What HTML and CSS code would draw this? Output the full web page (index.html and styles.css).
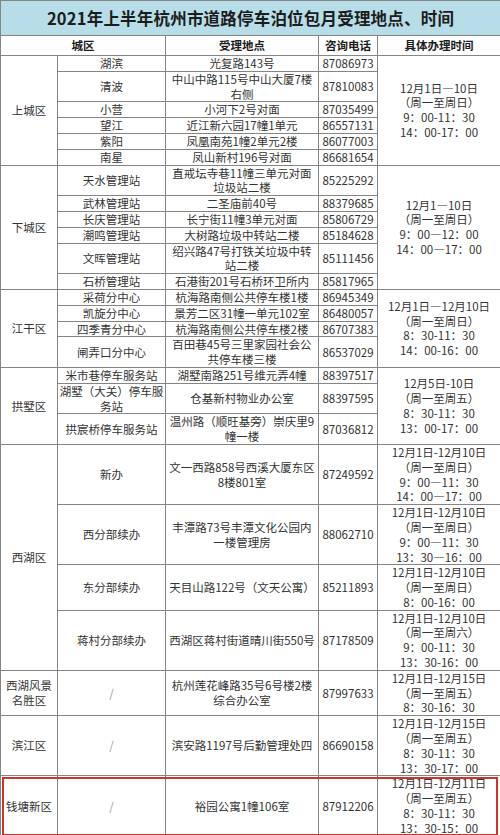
FILE: index.html
```html
<!DOCTYPE html>
<html lang="zh-CN">
<head>
<meta charset="utf-8">
<title>2021年上半年杭州市道路停车泊位包月受理地点、时间</title>
<link rel="stylesheet" href="styles.css">
</head>
<body>
<div class="sheet">
<table class="grid">
<colgroup><col class="c1"><col class="c2"><col class="c3"><col class="c4"><col class="c5"></colgroup>
<thead>
<tr class="title"><th colspan="5">2021年上半年杭州市道路停车泊位包月受理地点、时间</th></tr>
<tr class="head"><th colspan="2">城区</th><th>受理地点</th><th>咨询电话</th><th>具体办理时间</th></tr>
</thead>
<tbody>
<tr><td rowspan="6">上城区</td><td>湖滨</td><td>光复路143号</td><td>87086973</td><td rowspan="6">12月1日—10日<br>（周一至周日）<br>9：00-11：30<br>14：00-17：00</td></tr>
<tr><td>清波</td><td>中山中路115号中山大厦7楼<br>右侧</td><td>87810083</td></tr>
<tr><td>小营</td><td>小河下2号对面</td><td>87035499</td></tr>
<tr><td>望江</td><td>近江新六园17幢1单元</td><td>86557131</td></tr>
<tr><td>紫阳</td><td>凤凰南苑1幢2单元2楼</td><td>86077003</td></tr>
<tr><td>南星</td><td>凤山新村196号对面</td><td>86681654</td></tr>

<tr><td rowspan="6">下城区</td><td>天水管理站</td><td>直戒坛寺巷11幢三单元对面<br>垃圾站二楼</td><td>85225292</td><td rowspan="6">12月1—10日<br>（周一至周日）<br>9：00—12：00<br>14：00—17：00</td></tr>
<tr><td>武林管理站</td><td>二圣庙前40号</td><td>88379685</td></tr>
<tr><td>长庆管理站</td><td>长宁街11幢3单元对面</td><td>85806729</td></tr>
<tr><td>潮鸣管理站</td><td>大树路垃圾中转站二楼</td><td>85184628</td></tr>
<tr><td>文晖管理站</td><td>绍兴路47号打铁关垃圾中转<br>站二楼</td><td>85111456</td></tr>
<tr><td>石桥管理站</td><td>石港街201号石桥环卫所内</td><td>85817965</td></tr>

<tr><td rowspan="4">江干区</td><td>采荷分中心</td><td>杭海路南侧公共停车楼1楼</td><td>86945349</td><td rowspan="4">12月1日—12月10日<br>（周一至周日）<br>8：30-11：30<br>14：00-16：00</td></tr>
<tr><td>凯旋分中心</td><td>景芳二区31幢一单元102室</td><td>86480057</td></tr>
<tr><td>四季青分中心</td><td>杭海路南侧公共停车楼2楼</td><td>86707383</td></tr>
<tr><td>闸弄口分中心</td><td>百田巷45号三里家园社会公<br>共停车楼三楼</td><td>86537029</td></tr>

<tr><td rowspan="3">拱墅区</td><td>米市巷停车服务站</td><td>湖墅南路251号维元弄4幢</td><td>88397517</td><td rowspan="3">12月5日-10日<br>（周一至周五）<br>8：30-11：30<br>13：00-17：00</td></tr>
<tr><td>湖墅（大关）停车服<br>务站</td><td>仓基新村物业办公室</td><td>88397595</td></tr>
<tr><td>拱宸桥停车服务站</td><td>温州路（顺旺基旁）崇庆里9<br>幢一楼</td><td>87036812</td></tr>

<tr><td rowspan="4">西湖区</td><td>新办</td><td>文一西路858号西溪大厦东区<br>8楼801室</td><td>87249592</td><td>12月1日-12月10日<br>（周一至周日）<br>9：00—11：30<br>14：00—17：00</td></tr>
<tr><td>西分部续办</td><td>丰潭路73号丰潭文化公园内<br>一楼管理房</td><td>88062710</td><td>12月1日-12月10日<br>（周一至周日）<br>9：00—11：30<br>13：30—16：00</td></tr>
<tr><td>东分部续办</td><td>天目山路122号（文天公寓）</td><td>85211893</td><td>12月1日-12月10日<br>（周一至周日）<br>8：00-16：00</td></tr>
<tr><td>蒋村分部续办</td><td>西湖区蒋村街道晴川街550号</td><td>87178509</td><td>12月1日-12月10日<br>（周一至周六）<br>9：00-11：30<br>13：30-16：00</td></tr>

<tr><td>西湖风景<br>名胜区</td><td class="slash">/</td><td>杭州莲花峰路35号6号楼2楼<br>综合办公室</td><td>87997633</td><td>12月1日-12月15日<br>（周一至周五）<br>8：30-16：30</td></tr>
<tr><td>滨江区</td><td class="slash">/</td><td>滨安路1197号后勤管理处四</td><td>86690158</td><td>12月1日-12月15日<br>（周一至周五）<br>8：30-11：30<br>13：30-17：00</td></tr>
<tr><td>钱塘新区</td><td class="slash">/</td><td>裕园公寓1幢106室</td><td>87912206</td><td>12月1日-12月11日<br>（周一至周五）<br>8：30-11：30<br>13：30-15：00</td></tr>
</tbody>
</table>
<div class="mark"></div>
</div>
</body>
</html>
```
FILE: styles.css
```css
* { box-sizing: border-box; }
html, body { margin: 0; padding: 0; background: #ffffff; }
body {
  font-family: "Noto Sans CJK SC", "Liberation Sans", sans-serif;
  color: #333333;
}
.sheet { position: relative; width: 500px; }
.grid {
  width: 500px;
  border-collapse: collapse;
  table-layout: fixed;
  font-size: 11.5px;
  line-height: 14.8px;
}
.grid td, .grid th {
  border: 1px solid #858585;
  padding: 0;
  text-align: center;
  vertical-align: middle;
  white-space: nowrap;
  font-weight: normal;
}
.c1 { width: 57px; }
.c2 { width: 108px; }
.c3 { width: 153px; }
.c4 { width: 59px; }
.c5 { width: 123px; }
.title th {
  background: #b7dee8;
  font-size: 16.5px;
  font-weight: 700;
  height: 35px;
  color: #1c1c1c;
  letter-spacing: 0.2px;
}
.head th {
  font-weight: 700;
  height: 20px;
  color: #1c1c1c;
}
.grid td.slash { color: #9a9a9a; }
.mark {
  position: absolute;
  left: 2px;
  right: 2px;
  bottom: 1px;
  height: 59px;
  border: 2px solid #c9362c;
  pointer-events: none;
}
```
